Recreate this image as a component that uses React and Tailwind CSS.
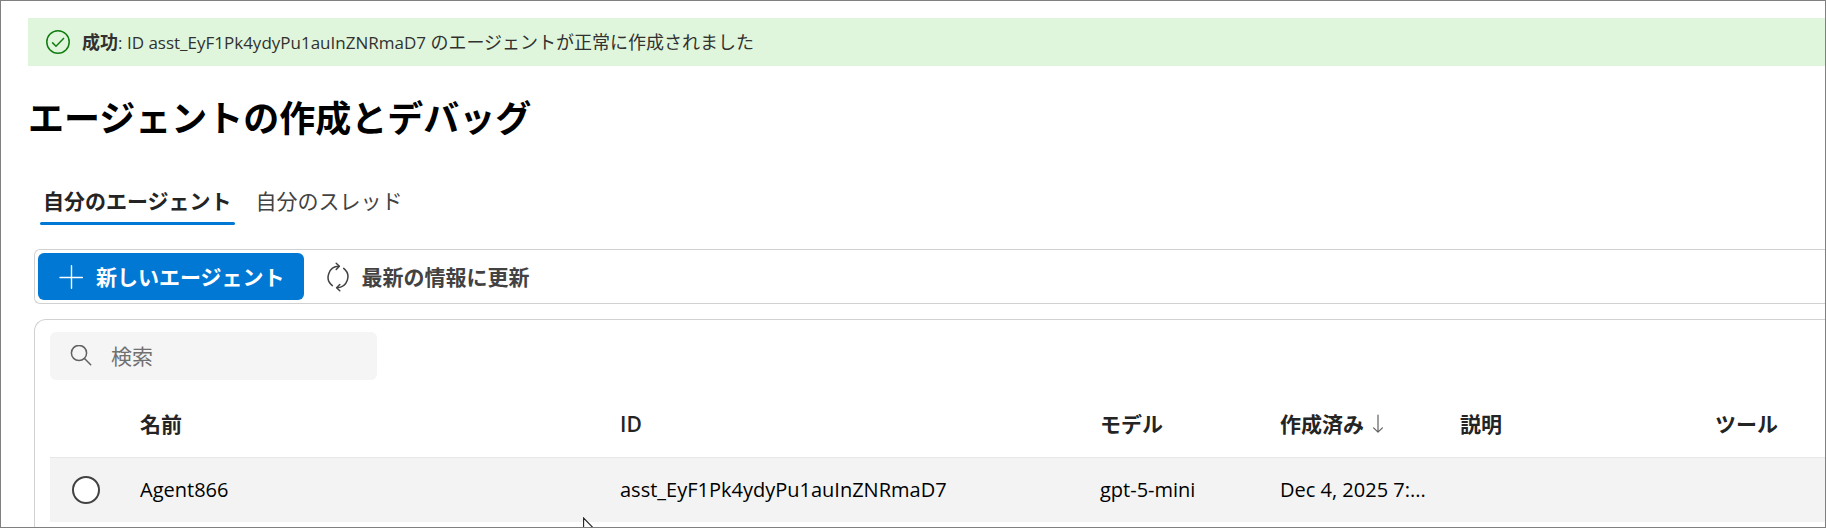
import { useState } from "react";

const agentes = [
  {
    id: "asst_EyF1Pk4ydyPu1auInZNRmaD7",
    nome: "Agent866",
    modelo: "gpt-5-mini",
    criado: "Dec 4, 2025 7:...",
    descricao: "",
    ferramentas: "",
  },
];

const abas = ["自分のエージェント", "自分のスレッド"];

function CheckIcon() {
  return (
    <svg width="24" height="24" viewBox="0 0 24 24" fill="none" stroke="#107c10" strokeWidth="1.5" aria-hidden="true">
      <circle cx="12" cy="12" r="11.2" />
      <path d="M6.2 12.4l3.8 3.8 8-8.2" />
    </svg>
  );
}

function PlusIcon() {
  return (
    <svg width="24" height="24" viewBox="0 0 24 24" fill="none" stroke="currentColor" strokeWidth="1.4" strokeLinecap="round" aria-hidden="true">
      <path d="M12.5 .7v22.6M1 12.5h22.6" />
    </svg>
  );
}

function RefreshIcon() {
  return (
    <svg width="24" height="30" viewBox="0 0 24 30" fill="none" stroke="currentColor" strokeWidth="1.5" strokeLinecap="round" strokeLinejoin="round" aria-hidden="true">
      <path d="M6.3 23.6A10.8 10.8 0 0 1 12.8 4.3" />
      <path d="M17.7 6.4A10.8 10.8 0 0 1 11.2 25.7" />
      <path d="M10.2 1.2l3.2 3.1-3.2 3.2" />
      <path d="M13.8 22.5l-3.2 3.2 3.2 3.1" />
    </svg>
  );
}

function SearchIcon() {
  return (
    <svg width="22" height="22" viewBox="0 0 22 22" fill="none" stroke="#616161" strokeWidth="1.5" strokeLinecap="round" aria-hidden="true">
      <circle cx="9" cy="8" r="7.6" />
      <path d="M14.5 13.5l6.2 6.2" />
    </svg>
  );
}

function SortIcon() {
  return (
    <svg width="12" height="20" viewBox="0 0 12 20" fill="none" stroke="#616161" strokeWidth="1.2" strokeLinecap="round" strokeLinejoin="round" aria-hidden="true">
      <path d="M6 1v17M1.6 13.8L6 18.2l4.4-4.4" />
    </svg>
  );
}

export default function AgentesApp() {
  const [aba, setAba] = useState(abas[0]);
  const [busca, setBusca] = useState("");
  const [selecionado, setSelecionado] = useState(null);

  const visiveis = agentes.filter((a) => a.nome.toLowerCase().includes(busca.toLowerCase()));

  return (
    <div lang="ja" className="relative flex h-screen flex-col overflow-hidden border border-[#808080] bg-white font-['Open_Sans','Noto_Sans_CJK_JP',sans-serif] text-[21px] leading-7 text-[#242424]">
      <div role="status" className="mt-[17px] ml-[27px] flex h-12 shrink-0 items-center gap-3 bg-[#dff6dd] pl-[18px] text-[18px] text-[#323130]">
        <CheckIcon />
        <p>
          <strong className="font-semibold">成功</strong>
          <span className="text-[17px]">: ID asst_EyF1Pk4ydyPu1auInZNRmaD7 </span>
          のエージェントが正常に作成されました
        </p>
      </div>

      <h1 className="mt-7 ml-[27px] text-[36px] leading-[50px] font-semibold text-black">エージェントの作成とデバッグ</h1>

      <div role="tablist" className="mt-[43px] ml-[39px] flex gap-[18px]">
        {abas.map((nome) => (
          <button
            key={nome}
            type="button"
            role="tab"
            aria-selected={aba === nome}
            onClick={() => setAba(nome)}
            className={
              aba === nome
                ? "flex flex-col gap-[7px] px-[3px] font-semibold after:-mx-[3px] after:h-[3px] after:self-stretch after:rounded-full after:bg-[#0078d4]"
                : "flex flex-col px-[3px] text-[#424242]"
            }
          >
            {nome}
          </button>
        ))}
      </div>

      <div role="toolbar" className="mt-6 ml-[33px] flex h-[55px] shrink-0 items-center gap-[22px] rounded-l-md border border-r-0 border-[#d1d1d1] pl-[3px] font-semibold">
        <button type="button" className="flex h-[47px] items-center gap-[13px] rounded-md bg-[#0078d4] pr-[19px] pl-[21px] text-white">
          <PlusIcon />
          新しいエージェント
        </button>
        <button type="button" className="flex h-[47px] items-center gap-3 text-[#424242]">
          <RefreshIcon />
          最新の情報に更新
        </button>
      </div>

      <div className="mt-[15px] ml-[33px] flex-1 rounded-tl-xl border-t border-l border-[#d1d1d1] pt-3 pl-[15px]">
        <label className="flex h-12 w-[327px] items-center gap-[19px] rounded-md bg-[#f5f5f5] pr-4 pl-5">
          <SearchIcon />
          <input
            value={busca}
            onChange={(e) => setBusca(e.target.value)}
            placeholder="検索"
            aria-label="検索"
            className="min-w-0 flex-1 bg-transparent outline-none placeholder:text-[#707070]"
          />
        </label>

        <table className="mt-[11px] w-full table-fixed border-collapse text-left">
          <colgroup>
            <col className="w-[90px]" />
            <col className="w-[480px]" />
            <col className="w-[480px]" />
            <col className="w-[180px]" />
            <col className="w-[180px]" />
            <col className="w-[255px]" />
            <col />
          </colgroup>
          <thead>
            <tr className="h-[66px]">
              <td></td>
              <th scope="col" className="font-semibold">名前</th>
              <th scope="col" className="font-semibold">ID</th>
              <th scope="col" className="font-semibold">モデル</th>
              <th scope="col" aria-sort="descending" className="font-semibold">
                <button type="button" className="flex items-center gap-2">
                  作成済み
                  <SortIcon />
                </button>
              </th>
              <th scope="col" className="font-semibold">説明</th>
              <th scope="col" className="font-semibold">ツール</th>
            </tr>
          </thead>
          <tbody>
            {visiveis.map((a) => (
              <tr key={a.id} className="h-[65px] border-t border-[#e8e8e8] bg-[#f3f3f3] text-[20px] text-black">
                <td className="pl-[22px]">
                  <input
                    type="radio"
                    name="agente"
                    aria-label={a.nome}
                    checked={selecionado === a.id}
                    onChange={() => setSelecionado(a.id)}
                    className="block size-7 appearance-none rounded-full border-2 border-[#424242] bg-white checked:border-8 checked:border-[#0078d4]"
                  />
                </td>
                <td>{a.nome}</td>
                <td>{a.id}</td>
                <td>{a.modelo}</td>
                <td className="whitespace-nowrap">{a.criado}</td>
                <td>{a.descricao}</td>
                <td>{a.ferramentas}</td>
              </tr>
            ))}
          </tbody>
        </table>
      </div>

      {/* ponteiro do mouse */}
      <svg className="pointer-events-none absolute top-[516px] left-[582px]" width="18" height="26" viewBox="0 0 18 26" fill="white" stroke="#222" strokeWidth="1.1" aria-hidden="true">
        <path d="M.6 1v21l5-4.6 3.2 7.2 3-1.3-3.2-7h6.8z" />
      </svg>
    </div>
  );
}
